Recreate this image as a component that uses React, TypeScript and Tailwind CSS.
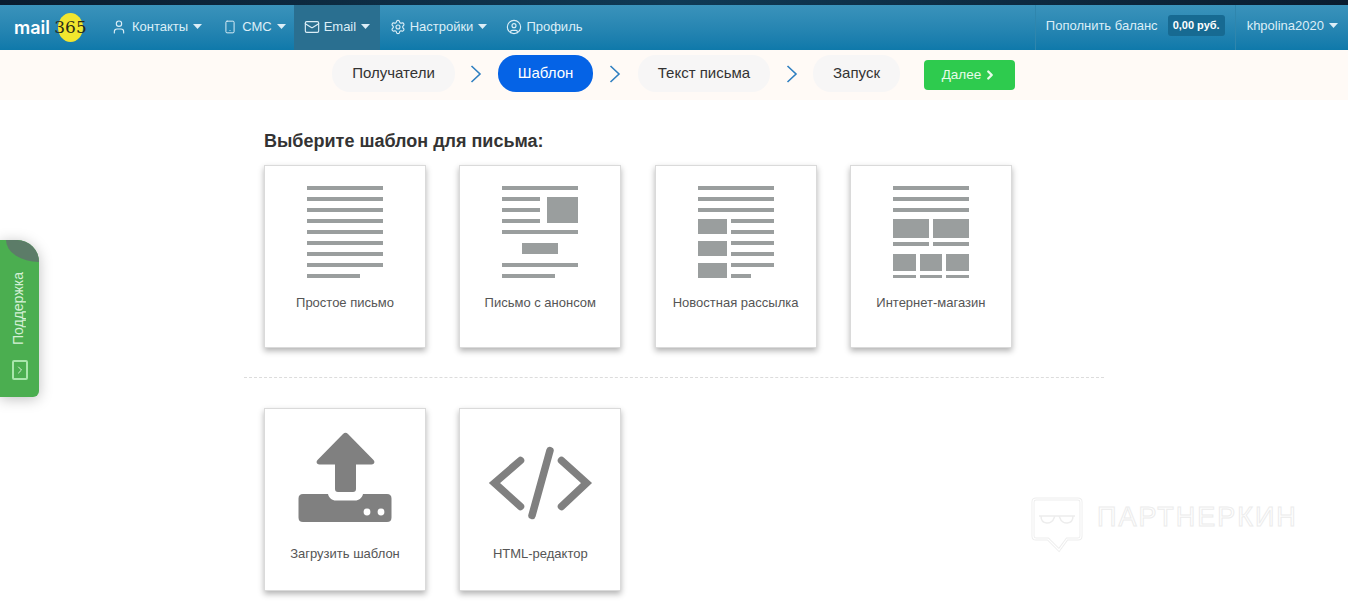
import React from 'react';
import { User, Smartphone, Mail, Settings, CircleUser, ChevronRight } from 'lucide-react';

const Caret = () => (
  <svg width="9" height="5" viewBox="0 0 9 5" className="ml-[5px] shrink-0">
    <path d="M0 0h9L4.5 5z" fill="currentColor" />
  </svg>
);

const Bars = ({ rects }: { rects: number[][] }) => (
  <svg width="76" height="92" viewBox="0 0 76 92" className="block">
    {rects.map(([x, y, w, h], i) => (
      <rect key={i} x={x} y={y} width={w} height={h} fill="#9a9e9e" />
    ))}
  </svg>
);

const plain = [0, 11, 22, 33, 44, 55, 66, 77].map((y) => [0, y, 76, 4]).concat([[0, 88, 53, 4]]);

const teaser = [
  [0, 0, 76, 4],
  [0, 11, 38, 4],
  [0, 22, 38, 4],
  [0, 33, 38, 4],
  [45, 11, 31, 26],
  [0, 44, 76, 4],
  [20, 57, 36, 11],
  [0, 77, 76, 4],
  [0, 88, 53, 4],
];

const news = [
  [0, 0, 76, 4],
  [0, 11, 76, 4],
  [0, 22, 76, 4],
  [0, 33, 29, 15],
  [0, 55, 29, 15],
  [0, 77, 29, 15],
  [33, 33, 43, 4],
  [33, 44, 43, 4],
  [33, 55, 43, 4],
  [33, 66, 43, 4],
  [33, 77, 43, 4],
  [33, 88, 20, 4],
];

const shop = [
  [0, 0, 76, 4],
  [0, 11, 76, 4],
  [0, 22, 76, 4],
  [0, 33, 36, 19],
  [40, 33, 36, 19],
  [0, 56, 36, 4],
  [40, 56, 36, 4],
  [0, 68, 23, 17],
  [27, 68, 22, 17],
  [53, 68, 23, 17],
  [0, 89, 23, 3],
  [27, 89, 22, 3],
  [53, 89, 23, 3],
];

const UploadIcon = () => (
  <svg width="94" height="92" viewBox="0 0 94 92" className="block">
    <path
      d="M45 2a3.500 3.500 0 0 1 5 0l25.500 26c1.800 2 .8 4.500-2 4.500H58V57q0 3-3 3H40q-3 0-3-3V32.500H21.500c-2.800 0-3.800-2.500-2-4.500z"
      fill="#808080"
    />
    <path
      d="M5 62h25c1 4 4 6.500 8 6.500h19c4 0 7-2.500 8-6.500h24q4.500 0 4.500 4.500V85.500Q93.500 90 89 90H5q-4.500 0-4.500-4.500V66.500Q.5 62 5 62z"
      fill="#808080"
    />
    <circle cx="69" cy="80" r="3.400" fill="#fff" />
    <circle cx="83" cy="80" r="3.400" fill="#fff" />
  </svg>
);

const CodeIcon = () => (
  <svg width="105" height="92" viewBox="0 0 105 92" className="block">
    <g fill="none" stroke="#808080" strokeWidth="7.500" strokeLinecap="round">
      <path d="M32.500 28.500 6.500 51l26 23.500" />
      <path d="M73.500 28.500l25 22.500-25 23.500" />
      <path d="M62 18.500 44 83.500" />
    </g>
  </svg>
);

const Card = ({ label, tall, children }: { label: string; tall?: boolean; children: React.ReactNode }) => (
  <div className="flex h-[183px] w-[162px] flex-col items-center border border-[#dadada] bg-white shadow-[0_3px_6px_rgba(0,0,0,0.3)]">
    <div className={tall ? 'h-[135px] pt-[23px]' : 'h-[127px] pt-[20px]'}>{children}</div>
    <div className="text-[13px] leading-[20px] text-[#555]">{label}</div>
  </div>
);

const Step = ({ label, active, className }: { label: string; active?: boolean; className: string }) => (
  <div
    className={`mb-[3px] flex h-[37px] items-center justify-center rounded-[18px] text-[15px] ${
      active ? 'bg-[#0563e6] text-white' : 'bg-[#f7f6f6] text-[#333]'
    } ${className}`}
  >
    {label}
  </div>
);

const Arrow = ({ className }: { className: string }) => (
  <svg width="12" height="18" viewBox="0 0 12 18" className={`mb-[3px] ${className}`}>
    <path d="M1.500 1l8.500 8-8.500 8" fill="none" stroke="#2f7fc0" strokeWidth="1.600" />
  </svg>
);

const App = () => {
  return (
    <div className="relative h-[605px] overflow-hidden bg-white font-['Liberation_Sans',sans-serif]">
      <div className="h-[5px] bg-gradient-to-r from-[#0a1c2e] via-[#0f3a55] to-[#0a1c2e]" />

      {/* top menu */}
      <div className="flex h-[45px] items-stretch bg-gradient-to-b from-[#3a93bb] to-[#0e79aa] text-[13px] text-[#dceef7]">
        <div className="ml-[14px] flex w-[74px] items-center">
          <span className="font-['Inter',sans-serif] text-[18px] font-semibold leading-none text-white">mail</span>
          <span className="ml-[8px] flex h-[29px] w-[25px] items-center justify-center whitespace-nowrap rounded-[50%] bg-[#f2e62e] font-['DejaVu_Serif',serif] text-[17px] font-light text-[#2b2b1a]">
            365
          </span>
        </div>
        <div className="ml-[23px] flex items-center pb-[2px]">
          <User size={16} strokeWidth={1.700} className="mr-[5px]" />
          Контакты
          <Caret />
        </div>
        <div className="ml-[21px] flex items-center pb-[2px]">
          <Smartphone size={14} strokeWidth={1.700} className="mr-[5px]" />
          СМС
          <Caret />
        </div>
        <div className="ml-[8px] flex w-[86px] items-center bg-[#2a6f90] pb-[2px] pl-[10px]">
          <Mail size={16} strokeWidth={1.700} className="mr-[4px]" />
          Email
          <Caret />
        </div>
        <div className="ml-[10px] flex items-center pb-[2px]">
          <Settings size={16} strokeWidth={1.700} className="mr-[4px]" />
          Настройки
          <Caret />
        </div>
        <div className="ml-[19px] flex items-center pb-[2px]">
          <CircleUser size={16} strokeWidth={1.700} className="mr-[4px]" />
          Профиль
        </div>
        <div className="ml-auto flex items-center border-l border-[#2f86ad] pb-[4px] pl-[10px] pr-[10px]">
          Пополнить баланс
          <span className="ml-[10px] rounded-[3px] bg-[#176a92] px-[5px] py-[2px] text-[11px] font-bold text-white">
            0,00 руб.
          </span>
        </div>
        <div className="flex items-center border-l border-[#2f86ad] pb-[4px] pl-[11px] pr-[10px]">
          khpolina2020
          <Caret />
        </div>
      </div>

      {/* wizard steps */}
      <div className="flex h-[50px] items-center bg-[#fffaf6] pl-[332px]">
        <Step label="Получатели" className="w-[123px]" />
        <Arrow className="ml-[15px]" />
        <Step label="Шаблон" active className="ml-[16px] w-[95px]" />
        <Arrow className="ml-[16px]" />
        <Step label="Текст письма" className="ml-[17px] w-[132px]" />
        <Arrow className="ml-[16px]" />
        <Step label="Запуск" className="ml-[15px] w-[87px]" />
        <div className="ml-[24px] flex h-[30px] w-[91px] items-center justify-center rounded-[4px] bg-[#2ecb4e] text-[13.500px] text-[#e8fbe9]">
          Далее
          <ChevronRight size={14} strokeWidth={4} className="ml-[2px]" />
        </div>
      </div>

      {/* templates */}
      <div className="ml-[244px] w-[860px]">
        <h2 className="ml-[20px] mt-[30px] text-[18px] font-bold leading-[22px] text-[#333]">Выберите шаблон для письма:</h2>
        <div className="ml-[20px] mt-[13px] flex gap-[33.300px]">
          <Card label="Простое письмо">
            <Bars rects={plain} />
          </Card>
          <Card label="Письмо с анонсом">
            <Bars rects={teaser} />
          </Card>
          <Card label="Новостная рассылка">
            <Bars rects={news} />
          </Card>
          <Card label="Интернет-магазин">
            <Bars rects={shop} />
          </Card>
        </div>
        <div className="mt-[29px] border-t border-dashed border-[#dcdcdc]" />
        <div className="ml-[20px] mt-[30px] flex gap-[33.300px]">
          <Card label="Загрузить шаблон" tall>
            <UploadIcon />
          </Card>
          <Card label="HTML-редактор" tall>
            <CodeIcon />
          </Card>
        </div>
      </div>

      {/* support tab */}
      <div className="absolute left-0 top-[240px] flex h-[157px] w-[39px] flex-col items-center overflow-hidden rounded-br-[6px] rounded-tr-[22px] bg-[#4bae50] shadow-[0_2px_14px_rgba(0,0,0,0.25)]">
        <div className="absolute right-0 top-0 h-[22px] w-[33px] rounded-bl-[100%] bg-[#5c7c68]" />
        <div className="mr-[3px] mt-[32px] rotate-180 text-[14px] leading-none text-[#d5f0d6] [writing-mode:vertical-rl]">Поддержка</div>
        <div className="mt-[15px] flex h-[20px] w-[16px] items-center justify-center rounded-[2px] border-2 border-[#a9e6ac] text-[#d5f0d6]">
          <ChevronRight size={14} strokeWidth={2} />
        </div>
      </div>

      {/* watermark */}
      <div className="absolute left-[1031px] top-[497px] flex items-start">
        <svg width="52" height="56" viewBox="0 0 52 56" fill="none">
          <g stroke="#ededed" strokeWidth="3">
            <path d="M5 2h42q3 0 3 3v34q0 3-3 3H36l-8 11-11-11H5q-3 0-3-3V5q0-3 3-3z" />
            <path d="M8 19h36M10 19c0 9 11 9 13 2l1-2M42 19c0 9-11 9-13 2l-1-2" strokeWidth="1.500" />
          </g>
          <path d="M5 2h42q3 0 3 3v34q0 3-3 3H36l-8 11-11-11H5q-3 0-3-3V5q0-3 3-3z" stroke="#fff" strokeWidth="1.200" />
        </svg>
        <span className="ml-[14px] mt-[6px] text-[27px] leading-[28px] tracking-[2px] text-transparent [-webkit-text-stroke:1px_#ececec]">
          ПАРТНЕРКИН
        </span>
      </div>
    </div>
  );
};

export default App;
